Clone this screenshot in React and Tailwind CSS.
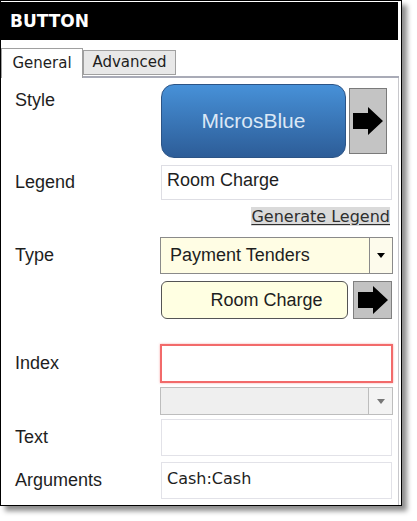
const sans = "font-['Liberation_Sans',Arial,sans-serif]";
const tahoma = "font-['DejaVu_Sans',Verdana,sans-serif]";

const ArrowIcon = ({ className }) => (
  <svg viewBox="0 0 30 28" className={className}>
    <polygon points="0,6 15,6 15,0 30,14 15,28 15,22 0,22" fill="#000" />
  </svg>
);

const Caret = ({ color = "#000" }) => (
  <svg viewBox="0 0 8 5" className="w-[8px] h-[5px]">
    <polygon points="0,0 8,0 4,5" fill={color} />
  </svg>
);

const Row = ({ label, top = false, className = "", children }) => (
  <div className={`flex ${top ? "items-start" : "items-center"} ${className}`}>
    <div
      className={`w-[145px] shrink-0 text-[18px] leading-[21px] text-[#1e1e1e] ${sans} ${
        top ? "pt-[6px]" : ""
      }`}
    >
      {label}
    </div>
    <div className="flex items-center">{children}</div>
  </div>
);

export default function App() {
  return (
    <div className="w-[417px] h-[521px] bg-white">
      <div className="w-[402px] h-[506px] border border-black bg-white flex flex-col shadow-[5px_5px_5px_rgba(0,0,0,0.45)]">
        {/* title bar */}
        <div className="mt-[1px] mr-[3px] h-[38px] bg-black flex items-center pl-[9px] pt-[1px]">
          <span className={`text-white font-bold text-[17px] ${tahoma}`}>BUTTON</span>
        </div>

        {/* tabs */}
        <div className="mt-[10px] mr-[2px] flex items-end h-[28px] border-b-2 border-[#a9abb7]">
          <div
            className={`h-[30px] -mb-[2px] w-[82px] bg-white border border-b-0 border-[#a0a0a0] flex items-center justify-center text-[15px] text-[#1e1e1e] ${tahoma}`}
          >
            General
          </div>
          <div
            className={`h-[25px] mb-[1px] w-[93px] bg-[#e8e8e8] border border-[#a0a0a0] flex items-center justify-center text-[15px] text-[#1e1e1e] ${tahoma}`}
          >
            Advanced
          </div>
        </div>

        {/* general panel */}
        <div className="flex-1 mr-[2px] border-r border-[#c8c8cc] pl-[14px] pt-[6px] flex flex-col">
          <Row label="Style" top>
            <div className="ml-[1px] w-[185px] h-[74px] rounded-[13px] border border-[#2c5486] bg-gradient-to-b from-[#4791d8] to-[#2d5d98] flex items-center justify-center">
              <span className={`text-[21px] text-[#dbe8f6] ${sans}`}>MicrosBlue</span>
            </div>
            <div className="ml-[3px] w-[38px] h-[66px] bg-[#c4c4c4] border border-[#7a7a7a] flex items-center justify-center">
              <ArrowIcon className="w-[30px] h-[28px]" />
            </div>
          </Row>

          <Row label="Legend" className="mt-[7px]">
            <div className="ml-[1px] w-[231px] h-[35px] border border-[#dedee4] px-[5px] pt-[2px]">
              <span className={`text-[18px] leading-[21px] text-[#1e1e1e] ${sans}`}>Room Charge</span>
            </div>
          </Row>

          <div className="mt-[7px] flex justify-end w-[375px]">
            <span
              className={`bg-[#dadada] text-[16px] leading-[19px] text-[#2e2e2e] underline underline-offset-2 ${tahoma}`}
            >
              Generate Legend
            </span>
          </div>

          <Row label="Type" className="mt-[11px]">
            <div className="w-[233px] h-[37px] border border-[#8a8a8a] bg-[#fffde4] flex">
              <div className={`flex-1 flex items-center pl-[9px] text-[18px] text-[#1e1e1e] ${sans}`}>
                Payment Tenders
              </div>
              <div className="w-[23px] border-l border-[#8a8a8a] bg-[#fdfbec] flex items-center justify-center">
                <Caret />
              </div>
            </div>
          </Row>

          <Row label="" className="mt-[7px]">
            <div
              className={`ml-[1px] w-[187px] h-[38px] rounded-[6px] border border-[#555] bg-[#ffffe2] flex items-center justify-center pl-[24px] text-[18px] text-[#1e1e1e] ${sans}`}
            >
              Room Charge
            </div>
            <div className="ml-[5px] w-[39px] h-[38px] bg-[#c2c2c2] border border-[#808080] flex items-center justify-center">
              <ArrowIcon className="w-[30px] h-[30px]" />
            </div>
          </Row>

          <Row label="Index" className="mt-[25px]">
            <div className="w-[233px] h-[39px] border-2 border-[#f26a6a] shadow-[0_0_2px_rgba(242,106,106,0.6)]" />
          </Row>

          <Row label="" className="mt-[4px]">
            <div className="w-[233px] h-[28px] border border-[#bdbdbd] bg-[#efefef] flex">
              <div className="flex-1" />
              <div className="w-[24px] border-l border-[#bdbdbd] bg-[#f3f3f3] flex items-center justify-center">
                <Caret color="#777" />
              </div>
            </div>
          </Row>

          <Row label="Text" className="mt-[4px]">
            <div className="ml-[1px] w-[231px] h-[37px] border border-[#e2e2e8]" />
          </Row>

          <Row label="Arguments" className="mt-[6px]">
            <div className="ml-[1px] w-[231px] h-[37px] border border-[#e2e2e8] px-[5px] pt-[3px]">
              <span className={`text-[16px] leading-[19px] text-[#1e1e1e] ${tahoma}`}>Cash:Cash</span>
            </div>
          </Row>
        </div>
      </div>
    </div>
  );
}
